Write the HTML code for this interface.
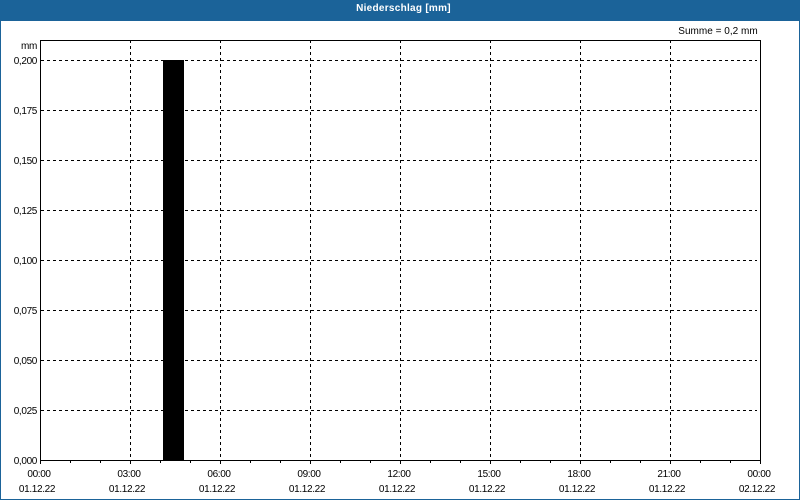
<!DOCTYPE html>
<html lang="de">
<head>
<meta charset="utf-8">
<title>Niederschlag</title>
<style>
html,body{margin:0;padding:0;background:#fff}
svg{display:block}
text{font-family:"Liberation Sans",Arial,sans-serif;font-size:10px;fill:#000;letter-spacing:-.35px}
</style>
</head>
<body>
<svg width="800" height="500" viewBox="0 0 800 500" xmlns="http://www.w3.org/2000/svg">
<rect width="800" height="500" fill="#fff"/>
<rect x="0" y="0" width="800" height="21" fill="#1b6399"/>
<rect x="0" y="0" width="1" height="500" fill="#1b6399"/>
<rect x="799" y="0" width="1" height="500" fill="#1b6399"/>
<rect x="0" y="499" width="800" height="1" fill="#1b6399"/>
<text x="403.5" y="11" text-anchor="middle" style="font-weight:bold;fill:#fff;letter-spacing:.28px">Niederschlag [mm]</text>
<text x="718" y="34" text-anchor="middle" style="letter-spacing:.02px">Summe = 0,2 mm</text>

<g stroke="#000" stroke-width="1" stroke-dasharray="3 3" fill="none" shape-rendering="crispEdges">
<path d="M41 60.5H757M41 110.5H757M41 160.5H757M41 210.5H757M41 260.5H757M41 310.5H757M41 360.5H757M41 410.5H757"/>
<path d="M130.5 40V460M220.5 40V460M310.5 40V460M400.5 40V460M490.5 40V460M580.5 40V460M670.5 40V460"/>
</g>
<rect x="163" y="60" width="21" height="400" fill="#000"/>
<g stroke="#000" stroke-width="1" fill="none" shape-rendering="crispEdges">
<path d="M40.5 40.5H760.5V460.5H40.5Z"/>
<path d="M40.5 461V464M70.5 461V463M100.5 461V463M130.5 461V464M160.5 461V463M190.5 461V463M220.5 461V464M250.5 461V463M280.5 461V463M310.5 461V464M340.5 461V463M370.5 461V463M400.5 461V464M430.5 461V463M460.5 461V463M490.5 461V464M520.5 461V463M550.5 461V463M580.5 461V464M610.5 461V463M640.5 461V463M670.5 461V464M700.5 461V463M730.5 461V463M760.5 461V464"/>
</g>

<g text-anchor="end">
<text x="37" y="49">mm</text>
<text x="37" y="64">0,200</text>
<text x="37" y="114">0,175</text>
<text x="37" y="164">0,150</text>
<text x="37" y="214">0,125</text>
<text x="37" y="264">0,100</text>
<text x="37" y="314">0,075</text>
<text x="37" y="364">0,050</text>
<text x="37" y="414">0,025</text>
<text x="37" y="464">0,000</text>
</g>
<g text-anchor="middle">
<text x="39" y="477">00:00</text><text x="37" y="492">01.12.22</text>
<text x="129" y="477">03:00</text><text x="127" y="492">01.12.22</text>
<text x="219" y="477">06:00</text><text x="217" y="492">01.12.22</text>
<text x="309" y="477">09:00</text><text x="307" y="492">01.12.22</text>
<text x="399" y="477">12:00</text><text x="397" y="492">01.12.22</text>
<text x="489" y="477">15:00</text><text x="487" y="492">01.12.22</text>
<text x="579" y="477">18:00</text><text x="577" y="492">01.12.22</text>
<text x="669" y="477">21:00</text><text x="667" y="492">01.12.22</text>
<text x="759" y="477">00:00</text><text x="757" y="492">02.12.22</text>
</g>
</svg>
</body>
</html>
